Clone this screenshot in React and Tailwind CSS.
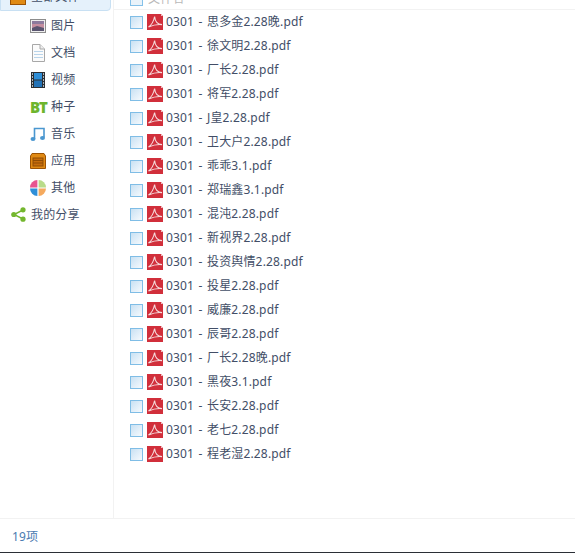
import React from 'react';

const files = [
  '思多金2.28晚', '徐文明2.28', '厂长2.28', '将军2.28', 'J皇2.28', '卫大户2.28', '乖乖3.1', '郑瑞鑫3.1',
  '混沌2.28', '新视界2.28', '投资舆情2.28', '投星2.28', '威廉2.28', '辰哥2.28', '厂长2.28晚', '黑夜3.1',
  '长安2.28', '老七2.28', '程老湿2.28',
];

const PdfIcon = () => (
  <svg width="16" height="16" viewBox="0 0 16 16" className="shrink-0 block">
    <path d="M0 0H14L16 2V16H0Z" fill="#d12f3b" />
    <path d="M14 0L16 2H14Z" fill="#f3c3c6" />
    <path
      d="M1.5 13C4.5 11 6.5 8 7.6 2.5C8 7 9.8 10.4 15 10.6C10 10.2 6 11 1.5 13Z"
      fill="none"
      stroke="#f6dcdd"
      strokeWidth="1.1"
    />
  </svg>
);

const PicIcon = () => (
  <svg width="16" height="16" viewBox="0 0 16 16">
    <rect x="0.5" y="1.5" width="15" height="13" fill="#eee" stroke="#8c8c8c" />
    <rect x="2" y="3" width="12" height="10" fill="#c58fa0" />
    <path d="M2 3H14V6H2Z" fill="#8d7b9d" />
    <path d="M2 10L7 8L14 10V13H2Z" fill="#5a5570" />
  </svg>
);

const DocIcon = () => (
  <svg width="16" height="18" viewBox="0 0 16 18">
    <path d="M2.5 0.5H10L14.5 5V17.5H2.5Z" fill="#fbfbfb" stroke="#a8a8a8" />
    <path d="M10 .5V5H14.5" fill="#eee" stroke="#a8a8a8" />
    <path d="M4 7.5H13M4 10.5H13M4 13.5H13" stroke="#b9d4ea" />
  </svg>
);

const VideoIcon = () => (
  <svg width="16" height="16" viewBox="0 0 16 16">
    <rect x="1" y="0" width="14" height="16" fill="#2b2f33" />
    <rect x="4" y="1" width="8" height="6.5" fill="#2f8fd8" />
    <rect x="4" y="8.5" width="8" height="6.5" fill="#2272b6" />
    <path d="M2 2H3M2 5H3M2 8H3M2 11H3M2 14H3M13 2H14M13 5H14M13 8H14M13 11H14M13 14H14" stroke="#d8e4ec" strokeWidth="1.4" />
  </svg>
);

const MusicIcon = () => (
  <svg width="16" height="16" viewBox="0 0 16 16" fill="none">
    <path d="M4.5 13V2.5H14V11.5" stroke="#4a97d0" strokeWidth="1.6" />
    <ellipse cx="3" cy="13" rx="2.5" ry="2" fill="#4a97d0" />
    <ellipse cx="12.5" cy="12" rx="2.5" ry="2" fill="#4a97d0" />
  </svg>
);

const AppIcon = () => (
  <svg width="16" height="16" viewBox="0 0 16 16">
    <path d="M2 .5H14L15.5 3V15.5H.5V3Z" fill="#e08a14" stroke="#9c5304" />
    <rect x="3" y="5" width="10" height="8" fill="#c56c0c" stroke="#8f4d05" />
    <path d="M3 7.5H13M3 10H13" stroke="#8f4d05" />
  </svg>
);

const OtherIcon = () => (
  <svg width="16" height="16" viewBox="0 0 16 16">
    <path d="M7.4 7.4H0A7.4 7.4 0 0 1 7.4 0Z" fill="#e8548f" />
    <path d="M8.6 7.4V0A7.4 7.4 0 0 1 16 7.4Z" fill="#b9dc8a" />
    <path d="M7.4 8.6V16A7.4 7.4 0 0 1 0 8.6Z" fill="#2f8fd8" />
    <path d="M8.6 8.6H16A7.4 7.4 0 0 1 8.6 16Z" fill="#f5aa5e" />
  </svg>
);

const ShareIcon = () => (
  <svg width="15" height="15" viewBox="0 0 15 15">
    <path d="M12 3L3 7.5L12 12" fill="none" stroke="#74b72e" strokeWidth="1.4" />
    <circle cx="12" cy="2.8" r="2.6" fill="#74b72e" />
    <circle cx="2.8" cy="7.5" r="2.6" fill="#74b72e" />
    <circle cx="12" cy="12.2" r="2.6" fill="#74b72e" />
  </svg>
);

const BtIcon = () => (
  <span className="w-4 text-[15px] leading-4 font-black text-[#6db52d] tracking-[-1px]">BT</span>
);

const navItems = [
  { label: '图片', icon: <PicIcon /> },
  { label: '文档', icon: <DocIcon /> },
  { label: '视频', icon: <VideoIcon /> },
  { label: '种子', icon: <BtIcon /> },
  { label: '音乐', icon: <MusicIcon /> },
  { label: '应用', icon: <AppIcon /> },
  { label: '其他', icon: <OtherIcon /> },
];

export default function App() {
  return (
    <div
      className="h-[553px] w-[575px] overflow-hidden bg-white flex flex-col text-[12px] text-[#424e67] tracking-[0.15px] [word-spacing:1.2px]"
      style={{ fontFamily: '"Noto Sans", "Noto Sans CJK SC", sans-serif' }}
    >
      <div className="flex-1 flex min-h-0">
        {/* sidebar */}
        <aside className="w-[114px] shrink-0 border-r border-[#f2f2f2]">
          <div className="h-[10px] w-[100px] -mt-px bg-[#e5f1fb] border border-[#c8e0f3] rounded-br-sm overflow-hidden pl-[9px] box-content">
            <div className="-mt-[11px] flex items-center gap-[5px] h-4">
              <span className="w-4 h-4 bg-[#e08a14] border border-[#9c5304] shrink-0" />
              <span>全部文件</span>
            </div>
          </div>
          <div className="pt-px">
            {navItems.map((item) => (
              <div key={item.label} className="h-[27px] flex items-center gap-[5px] pl-[30px]">
                <span className="w-4 flex justify-center shrink-0">{item.icon}</span>
                <span>{item.label}</span>
              </div>
            ))}
            <div className="h-[27px] flex items-center gap-[5px] pl-[11px]">
              <ShareIcon />
              <span>我的分享</span>
            </div>
          </div>
        </aside>

        {/* file list */}
        <main className="flex-1 min-w-0">
          <div className="h-[10px] border-b border-[#f2f2f2] overflow-hidden pl-[16px]">
            <div className="-mt-[10px] flex items-center gap-[5px]">
              <span className="w-[13px] h-[13px] border border-[#85c1e9] bg-[#eaf3fa]" />
              <span className="text-[#b8b8b8]">文件名</span>
            </div>
          </div>
          <div>
            {files.map((name, i) => (
              <div key={i} className="h-6 flex items-center pl-[16px]">
                <span className="w-[13px] h-[13px] border border-[#7fbde6] bg-gradient-to-br from-[#c9e1f3] to-[#f6fafd] shrink-0" />
                <span className="ml-[4px]"><PdfIcon /></span>
                <span className="ml-[3px] whitespace-nowrap">0301 - {name}.pdf</span>
              </div>
            ))}
          </div>
        </main>
      </div>

      {/* status bar */}
      <footer className="h-[34px] shrink-0 border-t border-[#f2f2f2] flex items-center pl-3 pt-[2px] text-[#4a7bb0]">
        19项
      </footer>
      <div className="h-px shrink-0 bg-[#2b2f36]" />
    </div>
  );
}
